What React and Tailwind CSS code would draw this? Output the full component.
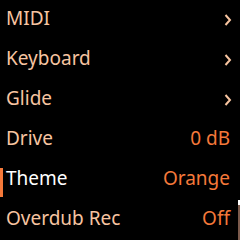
import React from "react";

const rows = [
  { label: "MIDI", chevron: true },
  { label: "Keyboard", chevron: true },
  { label: "Glide", chevron: true },
  { label: "Drive", value: "0 dB" },
  { label: "Theme", value: "Orange", selected: true },
  { label: "Overdub Rec", value: "Off" },
];

function Chevron() {
  return (
    <svg width="8" height="12" viewBox="0 0 8 12" className="mt-[14px] -mr-[2px]">
      <polyline
        points="1.5,1 6,6 1.5,11"
        fill="none"
        stroke="#f7c4a0"
        strokeWidth="2"
      />
    </svg>
  );
}

export default function App() {
  return (
    <div
      className="relative w-[240px] h-[240px] bg-black overflow-hidden"
      style={{ fontFamily: '"Noto Sans", sans-serif' }}
    >
      {rows.map((r, i) => (
        <div
          key={i}
          className="relative flex justify-between items-start h-10 pl-[6px] pr-[10px] text-[19px] leading-[36px]"
        >
          {r.selected && (
            <div className="absolute left-0 top-[8px] w-[3px] h-[29px] bg-[#f5793a]" />
          )}
          <span className={r.selected ? "text-white" : "text-[#f7c4a0]"}>
            {r.label}
          </span>
          {r.chevron ? (
            <Chevron />
          ) : (
            <span className="text-[#f5793a]">{r.value}</span>
          )}
        </div>
      ))}
      <div className="absolute right-0 top-[200px] w-[2px] h-[5px] bg-white" />
      <div className="absolute right-0 top-[205px] w-[2px] h-[35px] bg-[#7b5a4c]" />
    </div>
  );
}
